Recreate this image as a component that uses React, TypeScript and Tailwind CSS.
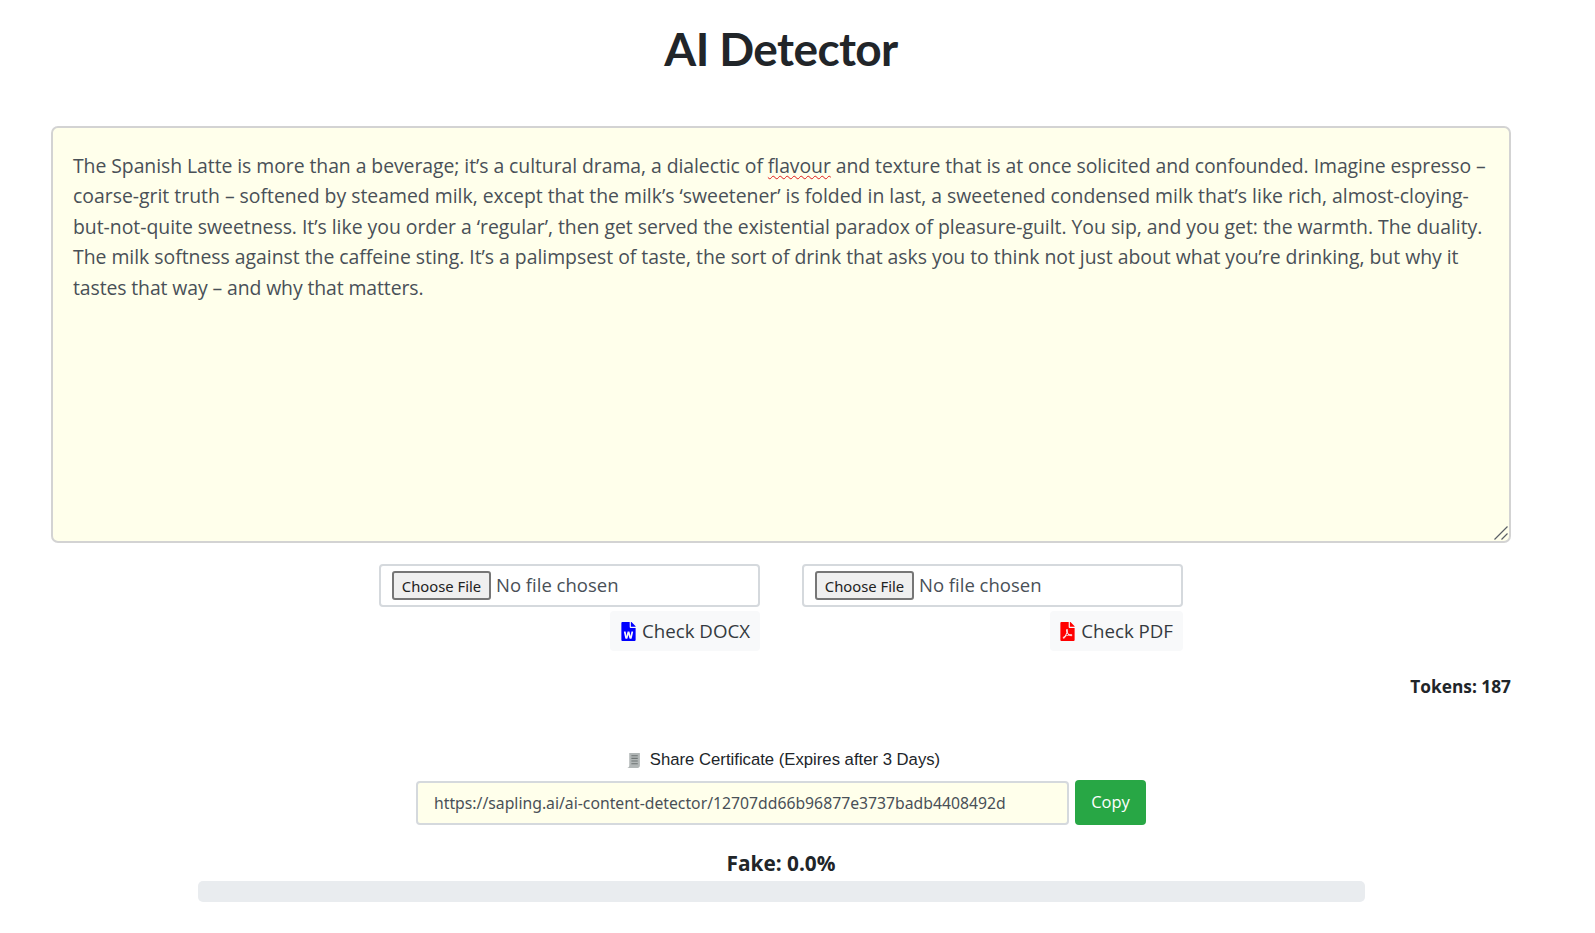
import { FaFilePdf, FaFileWord } from "react-icons/fa";

const sans = "font-['Open_Sans',sans-serif]";

function FilePick() {
  return (
    <div className="flex h-[43px] w-[381px] items-center rounded-[4px] border-2 border-[#d5d9dd] bg-white pl-[11px]">
      <button className="h-[29px] w-[99px] rounded-[3px] border-2 border-[#767676] bg-[#efefef] text-center font-['Noto_Sans',sans-serif] text-[14.8px] leading-[24px] text-[#222]">
        Choose File
      </button>
      <span className="ml-[5px] -translate-y-[1px] text-[18.5px] text-[#495057]">No file chosen</span>
    </div>
  );
}

export default function App() {
  return (
    <div className={`min-h-[933px] bg-white pl-[51px] pr-[84px] text-[#212529] ${sans}`}>
      <h1 className="pt-[18px] text-center font-['Lato',sans-serif] text-[46px] font-bold leading-[62px] tracking-[-0.6px] text-[#212529]">
        AI Detector
      </h1>
      <div className="relative mt-[46px] h-[417px] w-full overflow-hidden rounded-[7px] border-2 border-[#d3d3d3] bg-[#ffffeb] pl-[20px] pr-[16px] pt-[23px] text-[19.4px] leading-[30.4px] text-[#495057]">
        <p className="whitespace-nowrap tracking-[-0.06px]">
          The Spanish Latte is more than a beverage; it’s a cultural drama, a dialectic of{" "}
          <span className="underline decoration-[#e01b1b] decoration-wavy decoration-[1.2px] underline-offset-2">flavour</span>{" "}
          and texture that is at once solicited and confounded. Imagine espresso –
        </p>
        <p className="whitespace-nowrap">
          coarse-grit truth – softened by steamed milk, except that the milk’s ‘sweetener’ is folded in last, a sweetened condensed milk that’s like rich, almost-cloying-
        </p>
        <p className="whitespace-nowrap tracking-[-0.02px]">
          but-not-quite sweetness. It’s like you order a ‘regular’, then get served the existential paradox of pleasure-guilt. You sip, and you get: the warmth. The duality.
        </p>
        <p className="whitespace-nowrap tracking-[-0.02px]">
          The milk softness against the caffeine sting. It’s a palimpsest of taste, the sort of drink that asks you to think not just about what you’re drinking, but why it
        </p>
        <p className="whitespace-nowrap tracking-[-0.1px]">tastes that way – and why that matters.</p>
        <svg viewBox="0 0 14 14" className="absolute bottom-[1px] right-[1px] h-[14px] w-[14px]">
          <path d="M0.5 13.5 13.5 0.5M7.5 13.5 13.5 7.5" stroke="#5a5f66" strokeWidth="1.2" fill="none" />
        </svg>
      </div>

      <div className="mt-[21px] flex justify-center gap-[42px]">
        <div className="flex flex-col items-end gap-[4px]">
          <FilePick />
          <button className="flex h-[40px] items-center gap-[6px] rounded-[4px] bg-[#f8f9fa] pl-[11px] pr-[10px] pt-[1px] text-[18.7px] text-[#343a40]">
            <FaFileWord className="h-[19px] w-[15px] text-[#0000ff]" />
            Check DOCX
          </button>
        </div>
        <div className="flex flex-col items-end gap-[4px]">
          <FilePick />
          <button className="flex h-[40px] items-center gap-[6px] rounded-[4px] bg-[#f8f9fa] px-[10px] pt-[1px] text-[18.7px] text-[#343a40]">
            <FaFilePdf className="h-[19px] w-[15px] text-[#ff0000]" />
            Check PDF
          </button>
        </div>
      </div>

      <div className="mt-[24px] text-right text-[17.3px] font-bold leading-[24px]">Tokens: 187</div>

      <div className="mt-[49px] flex items-center justify-center gap-[9px] pl-[4px] font-['Liberation_Sans',sans-serif] text-[16.7px] leading-[24px] text-[#212529]">
        <svg viewBox="0 0 14 16" className="h-[17px] w-[15px]">
          <path d="M3 1h10v12c0 1-1 2-2 2H1c1 0 2-1 2-2z" fill="#b1b6b6" />
          <path d="M5 3.5h6M5 6h6M5 8.5h6M5 11h6" stroke="#6f7575" strokeWidth="1" />
        </svg>
        Share Certificate (Expires after 3 Days)
      </div>

      <div className="mt-[8px] flex items-center justify-center gap-[6px]">
        <div className="flex h-[44px] w-[653px] items-center rounded-[4px] border-2 border-[#d5d9dd] bg-[#ffffeb] pl-[16px] pt-[3px] font-['Noto_Sans',sans-serif] text-[15.75px] text-[#495057]">
          https://sapling.ai/ai-content-detector/12707dd66b96877e3737badb4408492d
        </div>
        <button className="h-[45px] w-[71px] rounded-[4px] bg-[#28a745] text-[16.5px] text-white">Copy</button>
      </div>

      <div className="mt-[23px] text-center text-[20.8px] font-bold leading-[30px] text-[#212529]">Fake: 0.0%</div>
      <div className="mx-auto mt-[3px] h-[21px] w-[1167px] rounded-[5px] bg-[#e9ecef]" />
    </div>
  );
}
